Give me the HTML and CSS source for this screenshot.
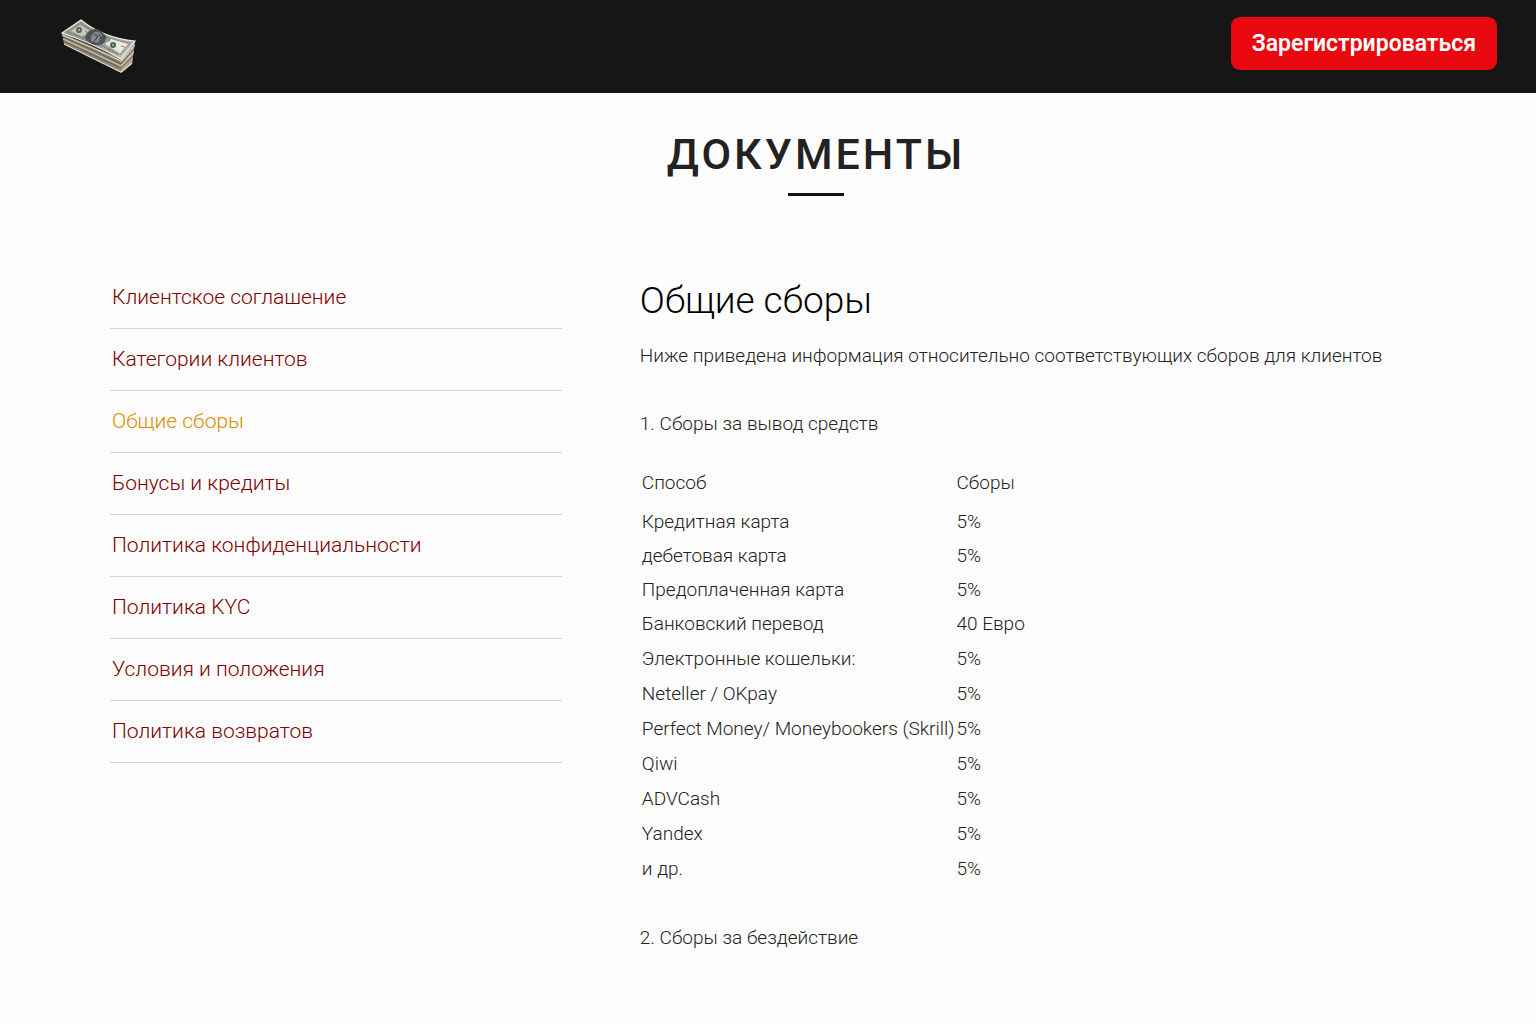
FILE: index.html
```html
<!DOCTYPE html>
<html lang="ru">
<head>
  <meta charset="utf-8">
  <title>Документы</title>
  <meta name="viewport" content="width=device-width, initial-scale=1.0">
  <link rel="stylesheet" href="styles.css">
</head>
<body>
  <header class="header">
    <a href="#" class="logo" aria-label="Главная">
      <svg width="76" height="57" viewBox="0 0 76 57">
        <defs>
          <linearGradient id="bill" x1="0" y1="0" x2="1" y2="1">
            <stop offset="0" stop-color="#a9aba1"/>
            <stop offset="0.45" stop-color="#8d8f8a"/>
            <stop offset="1" stop-color="#cfd0c6"/>
          </linearGradient>
        </defs>
        <!-- stack sides -->
        <path d="M1 16 L3 27 Q30 41 60 56 L71 47 L74 24 L60 42 Z" fill="#8b8571"/>
        <path d="M60 42 L74 24 L71 47 L60 56 Z" fill="#aaa591"/>
        <path d="M1 18 Q31 30 60 44 L74 28" fill="none" stroke="#e5e2d3" stroke-width="1"/>
        <path d="M2 20 Q31 32 60 47 L73 32" fill="none" stroke="#5a5646" stroke-width="0.8"/>
        <path d="M2 22 Q31 35 60 49 L73 35" fill="none" stroke="#d4cfbb" stroke-width="1"/>
        <path d="M3 24 Q31 38 60 51 L72 39" fill="none" stroke="#5b5747" stroke-width="0.8"/>
        <path d="M3 27 Q31 41 60 55 L71 46" fill="none" stroke="#dcd8c7" stroke-width="1.2"/>
        <!-- top bill -->
        <path d="M1 16 L20 3 Q42 21 74 24 L60 42 Q31 26 1 16 Z" fill="url(#bill)" stroke="#efeee4" stroke-width="1.2"/>
        <path d="M6 15 L20 6 Q42 23 69 26 L59 38 Q33 23 6 15 Z" fill="none" stroke="#63675f" stroke-width="0.8" stroke-dasharray="2 1"/>
        <path d="M10 14 L19 8 L29 14 L22 20 Z" fill="#c6c8bd"/>
        <path d="M44 27 L50 22 L67 27 L59 36 Z" fill="#e8e9df"/>
        <path d="M25 23 Q23 18 28 14 Q34 10 40 14 L45 19 Q46 24 41 27 Q35 31 25 23 Z" fill="#505359"/>
        <path d="M30 24 Q29 18 34 15 Q40 14 41 19 L37 26 Z" fill="#85888a"/>
        <path d="M33 18 q4 -1 3 3 l-3 3 M38 17 l2 5" fill="none" stroke="#34373a" stroke-width="1"/>
        <circle cx="18" cy="13" r="3" fill="#5c6660"/>
        <circle cx="18" cy="13" r="1" fill="#b6bdb0"/>
        <circle cx="52" cy="28" r="3" fill="#42694d"/>
        <circle cx="52" cy="28" r="1" fill="#aec0a7"/>
        <path d="M21 19 l4 2 M24 14 l3 2 M46 32 l11 5 M49 23 l-2 2 M60 29 l4 1" stroke="#6a6e66" stroke-width="0.8"/>
      </svg>
    </a>
    <button type="button" class="btn-register">Зарегистрироваться</button>
  </header>

  <main class="container">
    <h1 class="title">Документы</h1>
    <div class="row">
      <nav class="menu">
        <a href="#">Клиентское соглашение</a>
        <a href="#">Категории клиентов</a>
        <a href="#" class="active">Общие сборы</a>
        <a href="#">Бонусы и кредиты</a>
        <a href="#">Политика конфиденциальности</a>
        <a href="#">Политика KYC</a>
        <a href="#">Условия и положения</a>
        <a href="#">Политика возвратов</a>
      </nav>
      <section class="content">
        <h2>Общие сборы</h2>
        <p>Ниже приведена информация относительно соответствующих сборов для клиентов</p>
        <p>1. Сборы за вывод средств</p>
        <table class="fees">
          <thead>
            <tr><th>Способ</th><th>Сборы</th></tr>
          </thead>
          <tbody>
            <tr><td>Кредитная карта</td><td>5%</td></tr>
            <tr><td>дебетовая карта</td><td>5%</td></tr>
            <tr><td>Предоплаченная карта</td><td>5%</td></tr>
            <tr><td>Банковский перевод</td><td>40 Евро</td></tr>
          </tbody>
          <tbody class="wallets">
            <tr><td>Электронные кошельки:</td><td>5%</td></tr>
            <tr><td>Neteller / OKpay</td><td>5%</td></tr>
            <tr><td>Perfect Money/ Moneybookers (Skrill)</td><td>5%</td></tr>
            <tr><td>Qiwi</td><td>5%</td></tr>
            <tr><td>ADVCash</td><td>5%</td></tr>
            <tr><td>Yandex</td><td>5%</td></tr>
            <tr><td>и др.</td><td>5%</td></tr>
          </tbody>
        </table>
        <p>2. Сборы за бездействие</p>
      </section>
    </div>
  </main>
</body>
</html>
```
FILE: styles.css
```css
* {
  box-sizing: border-box;
}
body {
  margin: 0;
  font-family: Roboto, "Liberation Sans", sans-serif;
  font-size: 19px;
  font-weight: 300;
  color: #222;
  background-color: #fdfdfd;
}
.header {
  display: flex;
  justify-content: space-between;
  align-items: flex-start;
  padding: 17px 39px 19px 61px;
  background-color: #161616;
}
.logo svg {
  display: block;
}
.btn-register {
  padding: 13px 21px;
  border: none;
  border-radius: 9px;
  background-color: #e9080f;
  color: #fff;
  font-family: inherit;
  font-size: 23px;
  font-weight: 600;
  line-height: 27px;
  cursor: pointer;
}
.container {
  padding: 36px 14px 60px 110px;
}
.title {
  margin: 0;
  font-size: 43px;
  font-weight: 500;
  line-height: 50px;
  letter-spacing: 3px;
  text-align: center;
  text-transform: uppercase;
  color: #222;
}
.title::after {
  content: "";
  display: block;
  width: 56px;
  height: 3px;
  margin: 14px auto 0;
  background-color: #111;
}
.row {
  display: flex;
  gap: 78px;
  margin-top: 71px;
}
.menu {
  flex: 0 0 32%;
}
.menu a {
  display: block;
  padding: 16px 2px;
  border-bottom: 1px solid #d6d6d6;
  font-size: 21px;
  line-height: 29px;
  color: #7d0000;
  text-decoration: none;
}
.menu a.active {
  color: #d98c00;
}
.content {
  flex: 1;
  padding-top: 10px;
}
h2 {
  margin: 0 0 17px;
  font-size: 37px;
  font-weight: 300;
  line-height: 48px;
  color: #000;
}
p {
  margin: 0 0 40px;
  line-height: 28px;
}
.fees {
  margin: -17px 0 38px;
  border-collapse: collapse;
}
.fees th {
  padding: 0 0 0 2px;
  font-weight: 300;
  line-height: 44px;
  text-align: left;
}
.fees td {
  padding: 0 0 0 2px;
  line-height: 34px;
}
.fees .wallets td {
  line-height: 35px;
}
```
